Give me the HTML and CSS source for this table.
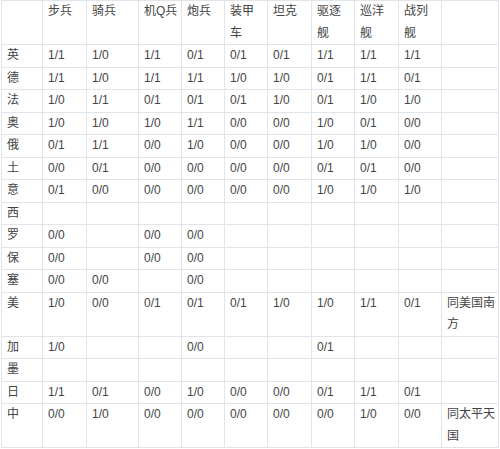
FILE: index.html
```html
<!DOCTYPE html>
<html>
<head>
<meta charset="utf-8">
<link rel="stylesheet" href="styles.css">
</head>
<body>
<table class="grid">
<colgroup>
<col class="c0"><col class="c1"><col class="c2"><col class="c3"><col class="c4"><col class="c5"><col class="c6"><col class="c7"><col class="c8"><col class="c9"><col class="c10">
</colgroup>
<tr><td></td><td>步兵</td><td>骑兵</td><td>机Q兵</td><td>炮兵</td><td>装甲<br>车</td><td>坦克</td><td>驱逐<br>舰</td><td>巡洋<br>舰</td><td>战列<br>舰</td><td></td></tr>
<tr><td>英</td><td>1/1</td><td>1/0</td><td>1/1</td><td>0/1</td><td>0/1</td><td>0/1</td><td>1/1</td><td>1/1</td><td>1/1</td><td></td></tr>
<tr><td>德</td><td>1/1</td><td>1/0</td><td>1/1</td><td>1/1</td><td>1/0</td><td>1/0</td><td>0/1</td><td>1/1</td><td>0/1</td><td></td></tr>
<tr><td>法</td><td>1/0</td><td>1/1</td><td>0/1</td><td>0/1</td><td>0/1</td><td>1/0</td><td>0/1</td><td>1/0</td><td>1/0</td><td></td></tr>
<tr><td>奥</td><td>1/0</td><td>1/0</td><td>1/0</td><td>1/1</td><td>0/0</td><td>0/0</td><td>1/0</td><td>0/1</td><td>0/0</td><td></td></tr>
<tr><td>俄</td><td>0/1</td><td>1/1</td><td>0/0</td><td>1/0</td><td>0/0</td><td>0/0</td><td>1/0</td><td>1/0</td><td>0/0</td><td></td></tr>
<tr><td>土</td><td>0/0</td><td>0/1</td><td>0/0</td><td>0/0</td><td>0/0</td><td>0/0</td><td>0/1</td><td>0/1</td><td>0/0</td><td></td></tr>
<tr><td>意</td><td>0/1</td><td>0/0</td><td>0/0</td><td>0/0</td><td>0/0</td><td>0/0</td><td>1/0</td><td>1/0</td><td>1/0</td><td></td></tr>
<tr><td>西</td><td></td><td></td><td></td><td></td><td></td><td></td><td></td><td></td><td></td><td></td></tr>
<tr><td>罗</td><td>0/0</td><td></td><td>0/0</td><td>0/0</td><td></td><td></td><td></td><td></td><td></td><td></td></tr>
<tr><td>保</td><td>0/0</td><td></td><td>0/0</td><td>0/0</td><td></td><td></td><td></td><td></td><td></td><td></td></tr>
<tr><td>塞</td><td>0/0</td><td>0/0</td><td></td><td>0/0</td><td></td><td></td><td></td><td></td><td></td><td></td></tr>
<tr><td>美</td><td>1/0</td><td>0/0</td><td>0/1</td><td>0/1</td><td>0/1</td><td>1/0</td><td>1/0</td><td>1/1</td><td>0/1</td><td>同美国南<br>方</td></tr>
<tr><td>加</td><td>1/0</td><td></td><td></td><td>0/0</td><td></td><td></td><td>0/1</td><td></td><td></td><td></td></tr>
<tr><td>墨</td><td></td><td></td><td></td><td></td><td></td><td></td><td></td><td></td><td></td><td></td></tr>
<tr><td>日</td><td>1/1</td><td>0/1</td><td>0/0</td><td>1/0</td><td>0/0</td><td>0/0</td><td>0/1</td><td>1/1</td><td>0/1</td><td></td></tr>
<tr><td>中</td><td>0/0</td><td>1/0</td><td>0/0</td><td>0/0</td><td>0/0</td><td>0/0</td><td>0/0</td><td>1/0</td><td>0/0</td><td>同太平天<br>国</td></tr>
</table>
</body>
</html>
```
FILE: styles.css
```css
html, body {
  margin: 0;
  padding: 0;
  background: #ffffff;
}
.grid {
  margin: 0 0 0 1px;
  border-collapse: collapse;
  table-layout: fixed;
  width: 497px;
  font-family: "Liberation Sans", Arial, "Noto Sans CJK SC", sans-serif;
  font-size: 12px;
  line-height: 21.5px;
  color: #444444;
}
.grid td {
  border: 1px solid #dfe5ea;
  padding: 0 0 0 5px;
  vertical-align: top;
  white-space: nowrap;
  overflow: hidden;
}
.c0 { width: 41px; }
.c1 { width: 44px; }
.c2 { width: 52px; }
.c3 { width: 43px; }
.c4 { width: 43px; }
.c5 { width: 43px; }
.c6 { width: 44px; }
.c7 { width: 43px; }
.c8 { width: 44px; }
.c9 { width: 43px; }
.c10 { width: 57px; }
```
